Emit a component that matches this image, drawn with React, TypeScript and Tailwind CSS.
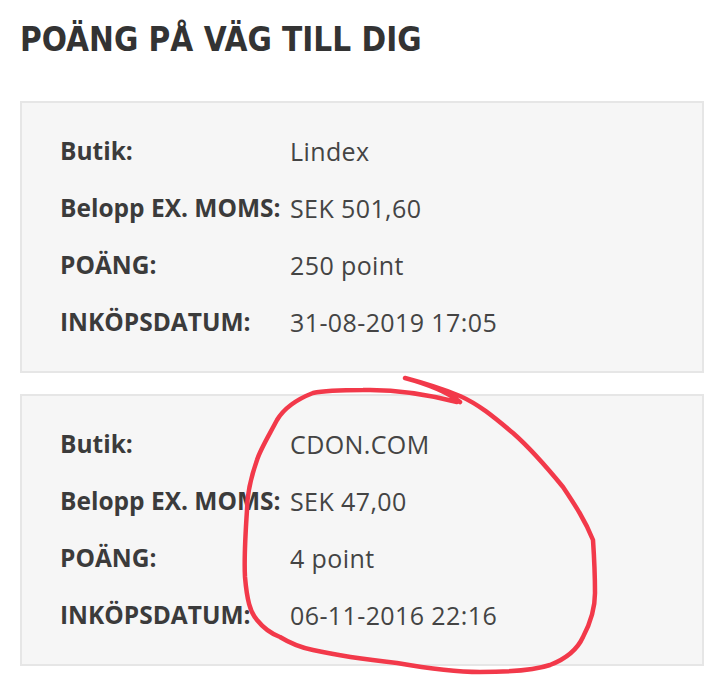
import React from 'react';

type Row = { label: string; value: string };

const cards: Row[][] = [
  [
    { label: 'Butik:', value: 'Lindex' },
    { label: 'Belopp EX. MOMS:', value: 'SEK 501,60' },
    { label: 'POÄNG:', value: '250 point' },
    { label: 'INKÖPSDATUM:', value: '31-08-2019 17:05' },
  ],
  [
    { label: 'Butik:', value: 'CDON.COM' },
    { label: 'Belopp EX. MOMS:', value: 'SEK 47,00' },
    { label: 'POÄNG:', value: '4 point' },
    { label: 'INKÖPSDATUM:', value: '06-11-2016 22:16' },
  ],
];

const Card = ({ rows }: { rows: Row[] }) => (
  <div className="border-2 border-[#e6e6e6] bg-[#f6f6f6] pl-[38px] py-[20px]">
    {rows.map((r) => (
      <div key={r.label} className="flex h-[57px] items-center">
        <span className="w-[230px] shrink-0 text-[24.5px] font-bold text-[#3b3b3b]">{r.label}</span>
        <span className="text-[25px] tracking-[0.4px] text-[#444]">{r.value}</span>
      </div>
    ))}
  </div>
);

export default function App() {
  return (
    <div className="relative min-h-[700px] bg-white px-[20px] pt-[20px] font-['Open_Sans',sans-serif]">
      <h1 className="font-['DejaVu_Sans_Condensed','DejaVu_Sans',sans-serif] text-[33px] font-bold leading-[40px] text-[#333]">
        POÄNG PÅ VÄG TILL DIG
      </h1>
      <div className="mt-[41px] flex w-[684px] flex-col gap-[21px]">
        {cards.map((rows, i) => (
          <Card key={i} rows={rows} />
        ))}
      </div>
      {/* hand-drawn red circle */}
      <svg className="pointer-events-none absolute left-0 top-0" width="720" height="700" viewBox="0 0 720 700">
        <path
          d="M405 378 C420 382 445 390 460 402 M457 402 C430 395 400 389 363 390 C340 390 322 391 313 393 C295 400 283 410 277 420 C268 437 260 450 257 460 C250 480 247 495 247 510 C245 540 244 560 245 577 C247 600 250 612 257 620 C265 630 272 634 280 637 C293 645 303 648 313 650 C340 656 370 660 397 663 C420 667 450 672 480 672 C510 672 535 670 550 665 C568 658 578 648 583 637 C592 620 595 605 595 593 C595 575 594 555 593 540 C585 520 575 505 563 487 C545 465 530 448 513 433 C495 418 480 405 460 396 C440 388 420 382 405 378"
          fill="none"
          stroke="#f2394a"
          strokeWidth="4.5"
          strokeLinecap="round"
          strokeLinejoin="round"
        />
      </svg>
    </div>
  );
}
